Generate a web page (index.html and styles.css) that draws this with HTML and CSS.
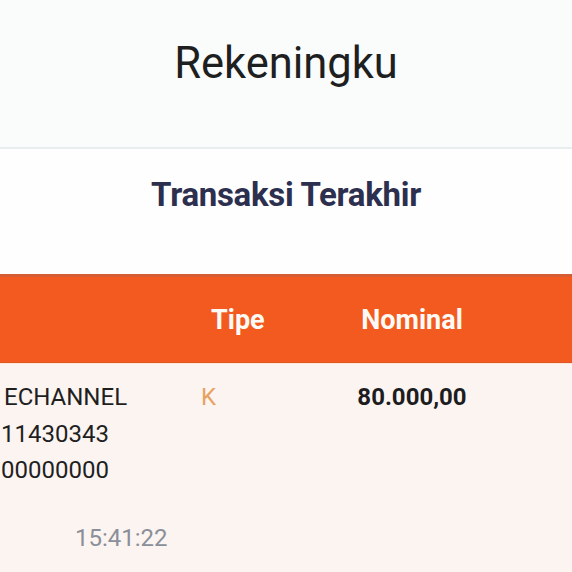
FILE: index.html
```html
<!DOCTYPE html>
<html lang="id">
<head>
<meta charset="utf-8">
<title>Rekeningku</title>
<link rel="stylesheet" href="styles.css">
</head>
<body>
<header class="appbar">
  <h1 class="appbar-title">Rekeningku</h1>
</header>
<section class="recent">
  <h2 class="recent-title">Transaksi Terakhir</h2>
</section>
<div class="table">
  <div class="thead">
    <div class="th th-desc"></div>
    <div class="th th-type">Tipe</div>
    <div class="th th-amount">Nominal</div>
  </div>
  <div class="trow">
    <div class="td td-desc">
      <div class="desc-line">ECHANNEL</div>
      <div class="desc-line desc-num">11430343</div>
      <div class="desc-line desc-num">00000000</div>
      <div class="desc-time">15:41:22</div>
    </div>
    <div class="td td-type">K</div>
    <div class="td td-amount">80.000,00</div>
  </div>
</div>
</body>
</html>
```
FILE: styles.css
```css
* { box-sizing: border-box; }
html, body {
  margin: 0;
  padding: 0;
  width: 572px;
  height: 572px;
  overflow: hidden;
  font-family: Roboto, "Liberation Sans", sans-serif;
  background: #fbf4f1;
}
.appbar {
  height: 149px;
  background: #fafbfb;
  border-bottom: 2px solid #e8eded;
  display: flex;
  justify-content: center;
  padding-top: 36px;
}
.appbar-title {
  margin: 0;
  font-size: 43.5px;
  font-weight: 400;
  line-height: 56px;
  color: #1e1f21;
}
.recent {
  height: 125px;
  background: #fefefe;
  display: flex;
  justify-content: center;
  padding-top: 26px;
}
.recent-title {
  margin: 0;
  font-size: 33px;
  font-weight: 700;
  line-height: 40px;
  color: #2c2f4e;
  letter-spacing: -0.3px;
}
.thead {
  height: 89px;
  background: #f25a1f;
  border-top: 3px solid #d65c33;
  border-bottom: 1px solid #de5726;
  display: grid;
  grid-template-columns: 190px 120px 204px 1fr;
  align-items: start;
  padding-top: 26px;
  color: #fdfaf6;
  font-weight: 700;
  font-size: 27px;
  line-height: 34px;
}
.th-type { padding-left: 21px; }
.th-amount { text-align: center; }
.trow {
  border-top: 1px solid #fde6d8;
  display: grid;
  grid-template-columns: 190px 120px 204px 1fr;
  align-items: start;
  padding-top: 15px;
  font-size: 24px;
  line-height: 36.5px;
  color: #1f1f1f;
}
.desc-line { padding-left: 4px; }
.desc-num { padding-left: 1px; }
.desc-time {
  margin-top: 31px;
  padding-left: 75px;
  color: #8b8f99;
}
.td-type {
  padding-left: 11px;
  color: #e9a161;
}
.td-amount {
  text-align: center;
  font-weight: 700;
  color: #1d1d1f;
}
```
